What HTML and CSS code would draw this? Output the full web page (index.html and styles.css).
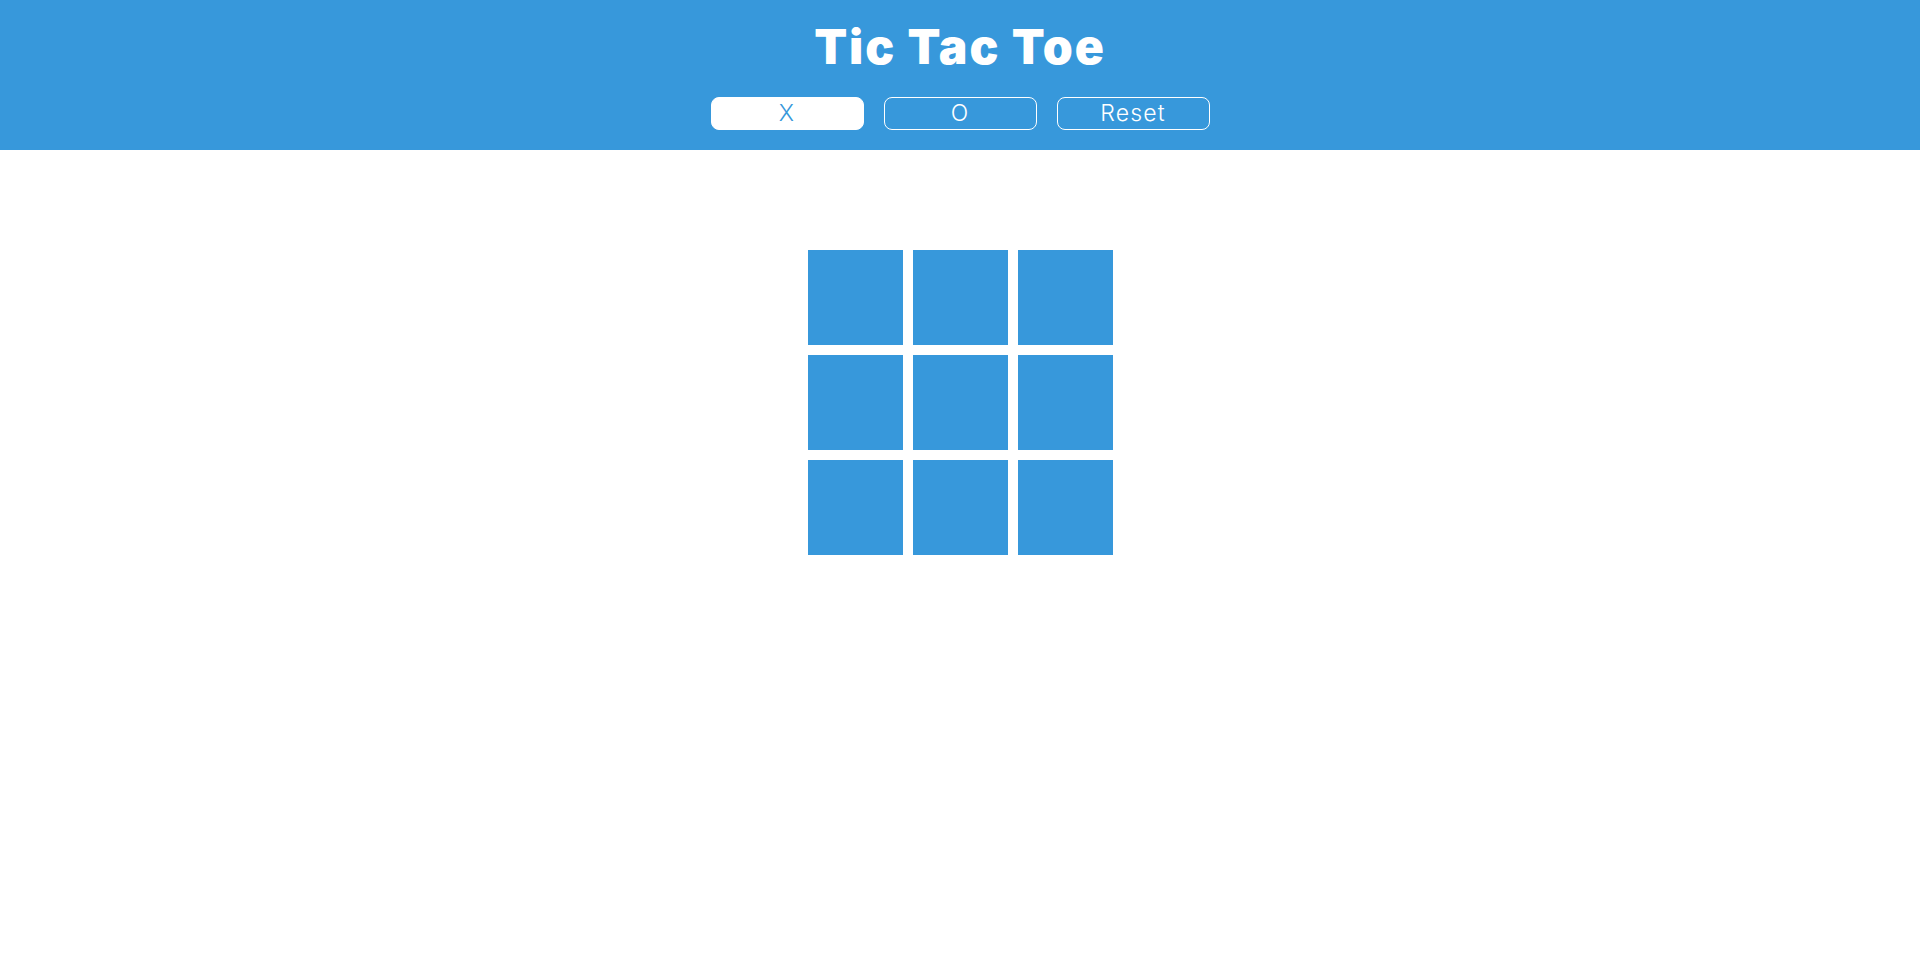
FILE: index.html
```html
<!DOCTYPE html>
<html lang="en">
<head>
<meta charset="utf-8">
<title>Tic Tac Toe</title>
<link rel="stylesheet" href="styles.css">
</head>
<body>
<header class="header">
  <h1 class="title">Tic Tac Toe</h1>
  <div class="controls">
    <button class="btn btn-active">X</button>
    <button class="btn">O</button>
    <button class="btn">Reset</button>
  </div>
</header>
<main class="board">
  <div class="cell"></div>
  <div class="cell"></div>
  <div class="cell"></div>
  <div class="cell"></div>
  <div class="cell"></div>
  <div class="cell"></div>
  <div class="cell"></div>
  <div class="cell"></div>
  <div class="cell"></div>
</main>
</body>
</html>
```
FILE: styles.css
```css
* { box-sizing: border-box; }
body {
  margin: 0;
  background: #fff;
  font-family: Inter, "Open Sans", sans-serif;
}
.header {
  background: #3798db;
  height: 150px;
  padding-top: 18px;
  display: flex;
  flex-direction: column;
  align-items: center;
}
.title {
  margin: 0;
  color: #fff;
  font-size: 48px;
  line-height: 58px;
  font-weight: 900;
  letter-spacing: 1.9px;
}
.controls {
  margin-top: 21px;
  display: flex;
  gap: 20px;
}
.btn {
  width: 153px;
  height: 33px;
  border: 1px solid #fff;
  border-radius: 8px;
  background: transparent;
  color: #fff;
  font-family: Inter, "Open Sans", sans-serif;
  font-size: 23px;
  font-weight: 300;
  letter-spacing: 1.2px;
  padding: 0;
  line-height: 31px;
}
.btn-active {
  background: #fff;
  color: #3798db;
}
.board {
  margin: 100px auto 0;
  width: 305px;
  display: grid;
  grid-template-columns: repeat(3, 95px);
  grid-auto-rows: 95px;
  gap: 10px;
}
.cell {
  background: #3798db;
}
```
